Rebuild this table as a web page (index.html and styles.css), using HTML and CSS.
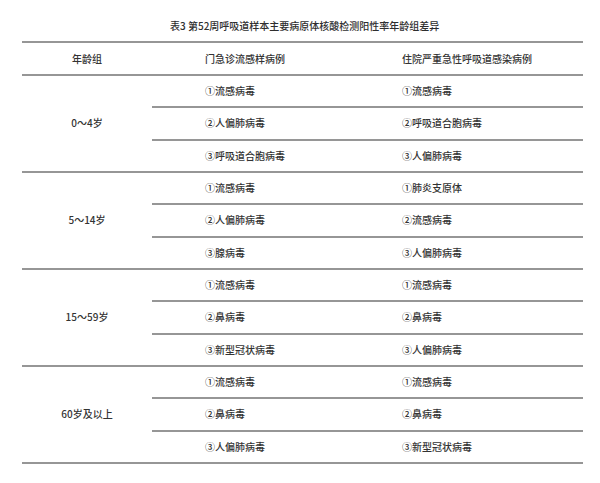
FILE: index.html
```html
<!DOCTYPE html>
<html lang="zh-CN">
<head>
<meta charset="utf-8">
<link rel="stylesheet" href="styles.css">
</head>
<body>
<div class="title">表3 第52周呼吸道样本主要病原体核酸检测阳性率年龄组差异</div>
<table class="tbl">
  <thead>
    <tr><th class="age">年龄组</th><th class="c2">门急诊流感样病例</th><th class="c3">住院严重急性呼吸道感染病例</th></tr>
  </thead>
  <tbody>
    <tr class="first"><td class="age" rowspan="3">0～4岁</td><td class="c2">①流感病毒</td><td class="c3">①流感病毒</td></tr>
    <tr><td class="c2">②人偏肺病毒</td><td class="c3">②呼吸道合胞病毒</td></tr>
    <tr><td class="c2">③呼吸道合胞病毒</td><td class="c3">③人偏肺病毒</td></tr>
    <tr class="first"><td class="age" rowspan="3">5～14岁</td><td class="c2">①流感病毒</td><td class="c3">①肺炎支原体</td></tr>
    <tr><td class="c2">②人偏肺病毒</td><td class="c3">②流感病毒</td></tr>
    <tr><td class="c2">③腺病毒</td><td class="c3">③人偏肺病毒</td></tr>
    <tr class="first"><td class="age" rowspan="3">15～59岁</td><td class="c2">①流感病毒</td><td class="c3">①流感病毒</td></tr>
    <tr><td class="c2">②鼻病毒</td><td class="c3">②鼻病毒</td></tr>
    <tr><td class="c2">③新型冠状病毒</td><td class="c3">③人偏肺病毒</td></tr>
    <tr class="first"><td class="age" rowspan="3">60岁及以上</td><td class="c2">①流感病毒</td><td class="c3">①流感病毒</td></tr>
    <tr><td class="c2">②鼻病毒</td><td class="c3">②鼻病毒</td></tr>
    <tr><td class="c2">③人偏肺病毒</td><td class="c3">③新型冠状病毒</td></tr>
  </tbody>
</table>
</body>
</html>
```
FILE: styles.css
```css
html, body {
  margin: 0;
  padding: 0;
  background: #ffffff;
}
body {
  font-family: "Noto Sans CJK SC", "Noto Sans", sans-serif;
  color: #333333;
  font-size: 10px;
}
.title {
  margin: 19px 0 0 0;
  height: 14px;
  line-height: 14px;
  padding-left: 170px;
  font-size: 10px;
  font-weight: 500;
  color: #2e2e2e;
}
.tbl {
  margin: 8px 0 0 22px;
  width: 561px;
  border-collapse: collapse;
  table-layout: fixed;
}
.tbl th, .tbl td {
  padding: 0;
  font-weight: 500;
  font-size: 10px;
  line-height: 14px;
  text-align: left;
  vertical-align: middle;
  border-bottom: 2px solid #969696;
}
.tbl thead th {
  border-top: 2px solid #969696;
  height: 31px;
}
.tbl td {
  height: 30.33px;
}
.tbl .age {
  width: 130px;
  text-align: center;
}
.tbl .c2 {
  width: 197px;
  padding-left: 53px;
  box-sizing: border-box;
}
.tbl .c3 {
  padding-left: 53px;
}
```
